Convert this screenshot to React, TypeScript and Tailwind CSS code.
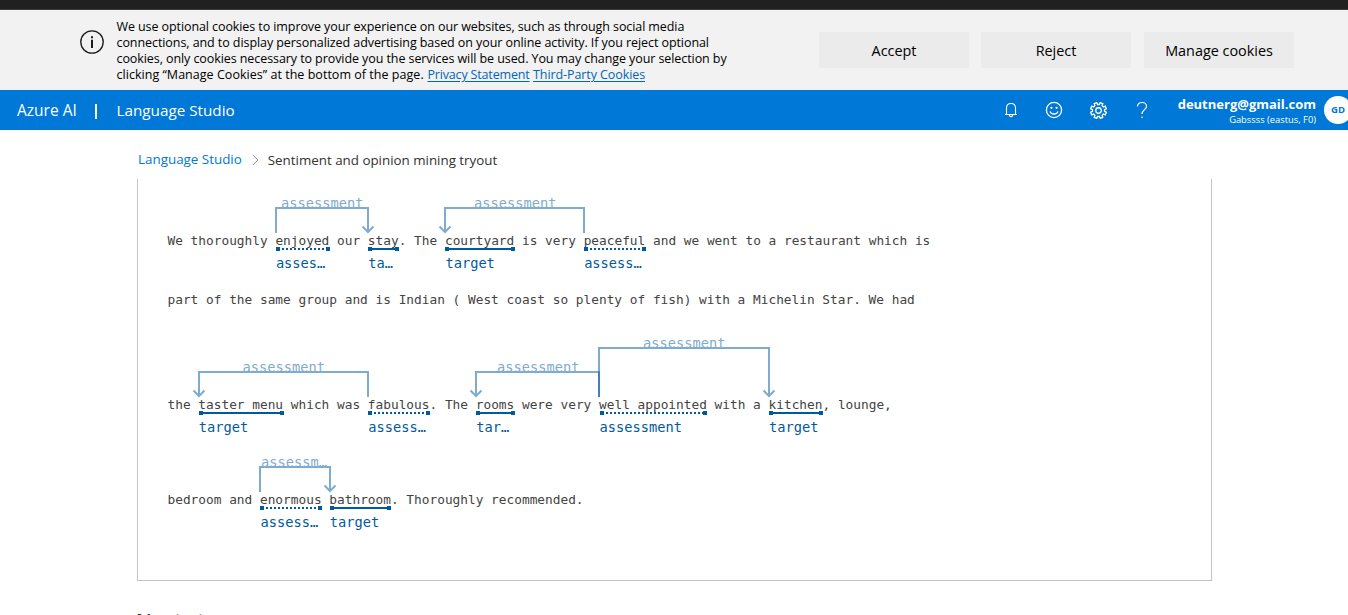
import type { ReactNode } from "react";

type Kind = "target" | "assessment";

function Token({ kind, label, children }: { kind: Kind; label: string; children: ReactNode }) {
  return (
    <span className="relative inline-block">
      {children}
      <span className="absolute left-[0.5px] -right-[0.5px] top-[16px] flex h-1 items-center">
        <span className="size-1 bg-[#005a9e]" />
        <span
          className={
            kind === "target"
              ? "h-0.5 flex-1 bg-[#005a9e]"
              : "h-0.5 flex-1 bg-[repeating-linear-gradient(90deg,transparent_0_2px,#005a9e_2px_4px)]"
          }
        />
        <span className="size-1 bg-[#005a9e]" />
      </span>
      <span className="absolute left-[0.5px] top-[22px] text-[13.7px] text-[#005a9e]">{label}</span>
    </span>
  );
}

function Line({ className, children }: { className: string; children: ReactNode }) {
  return <div className={`h-5 whitespace-pre leading-5 ${className}`}>{children}</div>;
}

const arcs = [
  "M276 233V208H368V231M362.5 226.5L368 232L373.5 226.5",
  "M584 233V208H445V231M439.5 226.5L445 232L450.5 226.5",
  "M368 397V372H199V395M193.5 390.5L199 396L204.5 390.5",
  "M599 397V372H476V395M470.5 390.5L476 396L481.5 390.5",
  "M599 397V348H769V395M763.5 390.5L769 396L774.5 390.5",
  "M260 492V467H330V490M324.5 485.5L330 491L335.5 485.5",
];

function Relations() {
  return (
    <div className="pointer-events-none absolute -left-px top-0 text-[13.7px] leading-4 text-[#7facce]">
      <span className="absolute left-[144px] top-[16px]">assessment</span>
      <span className="absolute left-[337px] top-[16px]">assessment</span>
      <span className="absolute left-[105.5px] top-[180px]">assessment</span>
      <span className="absolute left-[360px] top-[180px]">assessment</span>
      <span className="absolute left-[506px] top-[156px]">assessment</span>
      <span className="absolute left-[124px] top-[275px]">assessm…</span>
      <svg width="1075" height="402" viewBox="137 179 1075 402" className="max-w-none" fill="none" stroke="#005a9e" strokeWidth="2">
        {arcs.map((d) => (
          <path key={d} d={d} opacity="0.5" />
        ))}
      </svg>
    </div>
  );
}

function CookieBanner() {
  return (
    <section className="flex h-20 shrink-0 items-start bg-[#f2f2f2] text-black">
      <svg width="24" height="24" viewBox="0 0 24 24" className="ml-20 mt-5 shrink-0" fill="none" stroke="#1b1b1b">
        <circle cx="12" cy="12" r="11.2" strokeWidth="1.3" />
        <path d="M12 9.7V18M12 6.2V8.2" strokeWidth="2" />
      </svg>
      <div className="ml-[12.5px] mt-[9px] w-[619.5px] whitespace-nowrap text-[12.5px] leading-4">
        <div className="tracking-[-0.09px]">We use optional cookies to improve your experience on our websites, such as through social media</div>
        <div className="tracking-[-0.073px]">connections, and to display personalized advertising based on your online activity. If you reject optional</div>
        <div className="tracking-[-0.08px]">cookies, only cookies necessary to provide you the services will be used. You may change your selection by</div>
        <div className="flex">
          <span className="w-[311px] tracking-[0.03px]">clicking “Manage Cookies” at the bottom of the page.</span>
          <a className="mr-[3.5px] w-[102px] tracking-[-0.17px] text-[#0067b8] underline underline-offset-2">Privacy Statement</a>
          <a className="tracking-[-0.085px] text-[#0067b8] underline underline-offset-2">Third-Party Cookies</a>
        </div>
      </div>
      <div className="ml-[83px] mt-[22px] flex text-[14.4px]">
        <button className="h-9 w-[150px] bg-[#ebebeb] pt-0.5">Accept</button>
        <button className="ml-3 h-9 w-[150px] bg-[#ebebeb] pt-0.5">Reject</button>
        <button className="ml-[13px] h-9 w-[150px] bg-[#ebebeb] pt-0.5">Manage cookies</button>
      </div>
    </section>
  );
}

function gearPath() {
  const points: string[] = [];
  for (let i = 0; i < 8; i++) {
    const steps: [number, number][] = [
      [-14, 5.7],
      [-10, 7.6],
      [10, 7.6],
      [14, 5.7],
    ];
    for (const [offset, radius] of steps) {
      const a = ((i * 45 + 22.5 + offset) * Math.PI) / 180;
      points.push(`${(8 + radius * Math.cos(a)).toFixed(2)} ${(8 + radius * Math.sin(a)).toFixed(2)}`);
    }
  }
  return `M${points.join("L")}Z`;
}

function Header() {
  return (
    <header className="flex h-10 shrink-0 items-center bg-[#0078d7] text-white">
      <span className="ml-[17px] w-[78px] pt-0.5 text-[15.5px]">Azure AI</span>
      <span className="mt-0.5 h-[15px] w-[2px] bg-white" />
      <span className="ml-[19.5px] text-[15.25px]">Language Studio</span>
      <div className="ml-auto flex items-center">
        <svg width="16" height="16" viewBox="0 0 16 16" fill="none" stroke="white" strokeWidth="1.1">
          <path d="M3.5 12.5V6.2Q3.5 1.5 8 1.5T12.5 6.2V12.5M2 12.5H14M6.3 12.9Q6.5 14.6 8 14.6T9.7 12.9" />
        </svg>
        <svg width="18" height="18" viewBox="0 0 18 18" className="ml-[26px]" fill="none" stroke="white" strokeWidth="1.3">
          <circle cx="9" cy="9" r="7.6" />
          <path d="M5 10.4Q6 13 9 13T13 10.4" />
          <circle cx="6.4" cy="6.8" r="1.1" fill="white" stroke="none" />
          <circle cx="11.6" cy="6.8" r="1.1" fill="white" stroke="none" />
        </svg>
        <svg width="17" height="17" viewBox="0 0 16 16" className="ml-[27px]" fill="none" stroke="white" strokeWidth="1.2">
          <path d={gearPath()} />
          <circle cx="8" cy="8" r="2.6" />
        </svg>
        <svg width="12" height="18" viewBox="0 0 12 18" className="ml-[29px]" fill="none" stroke="white" strokeWidth="1.2">
          <path d="M1.5 5.6Q1.5 1.5 6 1.5T10.5 5.4C10.5 8.6 6 8.8 6 13M6 15.4V17" />
        </svg>
      </div>
      <div className="ml-[30px] flex w-[138px] flex-col items-end whitespace-nowrap pt-1">
        <span className="text-[13px] font-bold leading-4">deutnerg@gmail.com</span>
        <span className="text-[9.35px] leading-4">Gabssss (eastus, F0)</span>
      </div>
      <div className="-mr-1 ml-2 flex size-7 shrink-0 items-center justify-center rounded-full bg-white pt-px text-[9.5px] font-bold text-[#0078d4]">GD</div>
    </header>
  );
}

export default function App() {
  return (
    <div className="flex h-[615px] w-full flex-col overflow-hidden bg-white font-['Open_Sans','Noto_Sans',sans-serif]">
      <div className="h-2.5 shrink-0 border-b border-[#3c3c3c] bg-[#202020]" />
      <CookieBanner />
      <Header />
      <nav className="ml-[138px] flex h-[49px] shrink-0 items-center pt-[10px] text-[13.4px]">
        <a className="text-[#0078d4]">Language Studio</a>
        <svg width="7" height="12" viewBox="0 0 7 12" className="ml-[10px] mt-px" fill="none" stroke="#8a8886">
          <path d="M0.8 1L5.8 6L0.8 11" />
        </svg>
        <span className="ml-[9px] mt-px text-[13.35px] text-[#323130]">Sentiment and opinion mining tryout</span>
      </nav>
      <main className="relative ml-[137px] h-[402px] w-[1075px] shrink-0 border-x border-b border-[#c4c4c4] pl-[29.5px] font-['DejaVu_Sans_Mono',monospace] text-[12.8px] text-[#444342]">
        <Relations />
        <Line className="mt-[52px]">
          We thoroughly <Token kind="assessment" label="asses…">enjoyed</Token> our{" "}
          <Token kind="target" label="ta…">stay</Token>. The <Token kind="target" label="target">courtyard</Token> is very{" "}
          <Token kind="assessment" label="assess…">peaceful</Token> and we went to a restaurant which is
        </Line>
        <Line className="mt-[39px]">
          part of the same group and is Indian ( West coast so plenty of fish) with a Michelin Star. We had
        </Line>
        <Line className="mt-[85px]">
          the <Token kind="target" label="target">taster menu</Token> which was{" "}
          <Token kind="assessment" label="assess…">fabulous</Token>. The <Token kind="target" label="tar…">rooms</Token> were very{" "}
          <Token kind="assessment" label="assessment">well appointed</Token> with a{" "}
          <Token kind="target" label="target">kitchen</Token>, lounge,
        </Line>
        <Line className="mt-[75px]">
          bedroom and <Token kind="assessment" label="assess…">enormous</Token>{" "}
          <Token kind="target" label="target">bathroom</Token>. Thoroughly recommended.
        </Line>
      </main>
      <h2 className="ml-[136px] mt-[25px] shrink-0 text-[20px] font-semibold text-[#323130]">Next steps</h2>
    </div>
  );
}
